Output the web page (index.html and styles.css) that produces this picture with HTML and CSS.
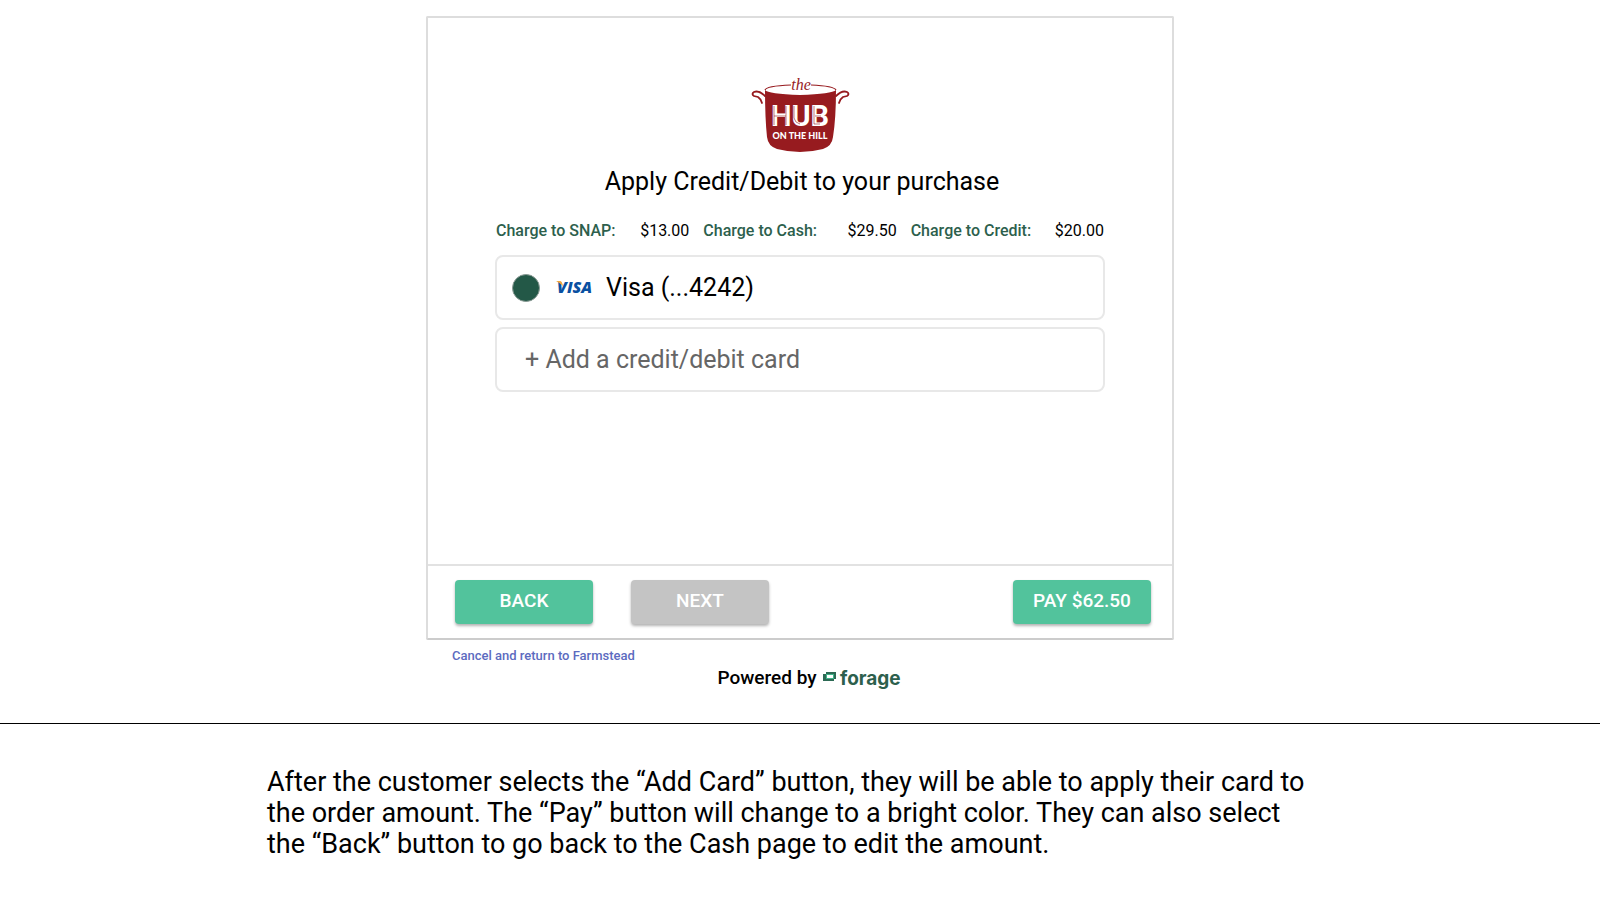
FILE: index.html
```
<!DOCTYPE html>
<html lang="en">
<head>
    <meta charset="UTF-8">
    <meta name="viewport" content="width=device-width, initial-scale=1.0">
    <title>Apply Credit/Debit</title>
    <link rel="stylesheet" href="styles.css">
</head>
<body>
    <main class="checkout">
        <form class="card">
            <div class="card-body">
                <svg class="hub-logo" viewBox="0 0 100 80" role="img" aria-label="The Hub on the Hill">
                    <path d="M15 14 Q18 18 50 19 Q82 18 86 14 Q86 42 83 61 Q82 70 73 73 Q50 79 27 73 Q18 70 17 61 Q15 42 15 14Z" fill="#971b1f"/>
                    <path d="M41 9 Q16 10 15 14 M86 14 Q84 10 61 9" fill="none" stroke="#971b1f" stroke-width="1.2"/>
                    <path d="M15 20 Q9 14 4 16 Q1 18 4 20 L8 21 Q11 23 12 27 M86 20 Q92 14 97 16 Q100 18 97 20 L93 21 Q90 23 89 27" fill="none" stroke="#971b1f" stroke-width="1.8" stroke-linecap="round"/>
                    <text class="hub-the" x="51" y="14" text-anchor="middle">the</text>
                    <text class="hub-name" x="50" y="50" text-anchor="middle">HUB</text>
                    <path d="M24 30V49 M36 30V49 M24 40H36 M44 30V42Q45 47 50 48 M64 30V48H70 M65 40H71" fill="none" stroke="#971b1f" stroke-width=".6"/>
                    <text class="hub-hill" x="50" y="63" text-anchor="middle">ON THE HILL</text>
                </svg>
                <h1 class="title">Apply Credit/Debit to your purchase</h1>
                <dl class="charges">
                    <div class="charge"><dt>Charge to SNAP:</dt><dd>$13.00</dd></div>
                    <div class="charge"><dt>Charge to Cash:</dt><dd>$29.50</dd></div>
                    <div class="charge"><dt>Charge to Credit:</dt><dd>$20.00</dd></div>
                </dl>
                <div class="methods">
                    <label class="method">
                        <input class="method-radio" type="radio" name="method" checked>
                        <svg class="visa-logo" viewBox="0 0 38 24" aria-hidden="true">
                            <text class="visa-text" x="1" y="17">VISA</text>
                            <path d="M0 5H4Q6 5 7 10Q4 7 0 5Z" fill="#f2a73b"/>
                        </svg>
                        <span>Visa (...4242)</span>
                    </label>
                    <button class="method method-add" type="button">+ Add a credit/debit card</button>
                </div>
            </div>
            <div class="card-footer">
                <button class="button" type="button">BACK</button>
                <button class="button button-disabled" type="button" disabled>NEXT</button>
                <button class="button button-pay" type="button">PAY $62.50</button>
            </div>
        </form>
        <a class="cancel" href="#">Cancel and return to Farmstead</a>
        <div class="powered">
            <span>Powered by</span>
            <svg class="forage-logo" viewBox="0 0 80 28" role="img" aria-label="forage">
                <path d="M3 8H13V15H11V17H0V10H3Z" fill="#2d6a54"/>
                <path d="M3 10H11V15H3Z" fill="#3fb48a"/>
                <path d="M4 11H10V14H4Z" fill="#fff"/>
                <text class="forage-text" x="17" y="21">forage</text>
            </svg>
        </div>
    </main>
    <section class="notes">
        <p class="notes-text">After the customer selects the “Add Card” button, they will be able to apply their card to the order amount. The “Pay” button will change to a bright color. They can also select the “Back” button to go back to the Cash page to edit the amount.</p>
    </section>
</body>
</html>
```

FILE: styles.css
```
* {
    box-sizing: border-box;
}

body {
    margin: 0;
    background-color: #fff;
    color: #000;
    font-family: Roboto, sans-serif;
}

.checkout {
    max-width: 748px;
    margin: 0 auto;
    padding: 16px 0 31px;
}

.card {
    border: 2px solid #ddd;
    border-bottom-color: #ccc;
    border-radius: 2px;
}

.card-body {
    display: flex;
    flex-direction: column;
    align-items: center;
    min-height: 546px;
    padding: 58px 67px 0;
}

.hub-logo {
    width: 100px;
    height: 80px;
}

.hub-the {
    font: italic 16px "Liberation Serif", serif;
    fill: #971b1f;
}

.hub-name {
    font: bold 29px Roboto, sans-serif;
    fill: #fff;
}

.hub-hill {
    font: 900 9px Lato, sans-serif;
    fill: #fff;
}

.title {
    margin: 10px 0 23px;
    padding-left: 4px;
    font-size: 25px;
    font-weight: 400;
    line-height: 32px;
}

.charges {
    display: grid;
    grid-template-columns: repeat(3, 1fr);
    gap: 14px;
    width: 100%;
    margin: 0 0 14px;
    padding: 0 1px;
    font-size: 16px;
    line-height: 20px;
}

.charge {
    display: flex;
    justify-content: space-between;
}

.charge dt {
    color: #2d5f4d;
    font-weight: 500;
}

.charge dd {
    margin: 0;
}

.methods {
    display: flex;
    flex-direction: column;
    gap: 7px;
    width: 100%;
}

.method {
    display: flex;
    align-items: center;
    height: 65px;
    padding: 0 15px;
    border: 2px solid #e8e8e8;
    border-radius: 8px;
    background-color: #fff;
    font-family: inherit;
    font-size: 25px;
    cursor: pointer;
}

.method-radio {
    appearance: none;
    width: 28px;
    height: 28px;
    margin: 0 16px 0 0;
    border: 1px solid #8a9a94;
    border-radius: 50%;
    background-color: #235847;
}

.visa-logo {
    width: 38px;
    height: 24px;
    margin-right: 12px;
}

.visa-text {
    font: italic 800 16px "Open Sans", sans-serif;
    fill: #0a50a1;
}

.method-add {
    padding: 0 28px;
    color: #666;
}

.card-footer {
    display: flex;
    align-items: center;
    gap: 38px;
    padding: 14px 21px 14px 27px;
    border-top: 2px solid #e2e2e2;
}

.button {
    width: 138px;
    height: 44px;
    padding: 0 0 4px;
    border: none;
    border-radius: 4px;
    background-color: #52c39c;
    box-shadow: 0 2px 3px rgba(0, 0, 0, 0.3);
    color: #fff;
    font-family: inherit;
    font-size: 19px;
    font-weight: 500;
    cursor: pointer;
}

.button-disabled {
    background-color: #c4c4c4;
    cursor: default;
}

.button-pay {
    margin-left: auto;
}

.cancel {
    display: block;
    width: fit-content;
    margin: 8px 0 0 26px;
    color: #5c6bc0;
    font-size: 13px;
    font-weight: 500;
    line-height: 16px;
    text-decoration: none;
}

.powered {
    display: flex;
    align-items: center;
    justify-content: center;
    gap: 6px;
    padding-left: 20px;
    font-size: 19px;
    font-weight: 500;
    line-height: 24px;
}

.forage-logo {
    width: 80px;
    height: 28px;
}

.forage-text {
    font: bold 19px Inter, sans-serif;
    fill: #2d5f4d;
}

.notes {
    border-top: 1px solid #000;
    padding: 43px 16px;
}

.notes-text {
    max-width: 1066px;
    margin: 0 auto;
    padding-right: 24px;
    font-size: 27px;
    line-height: 31px;
}
```
